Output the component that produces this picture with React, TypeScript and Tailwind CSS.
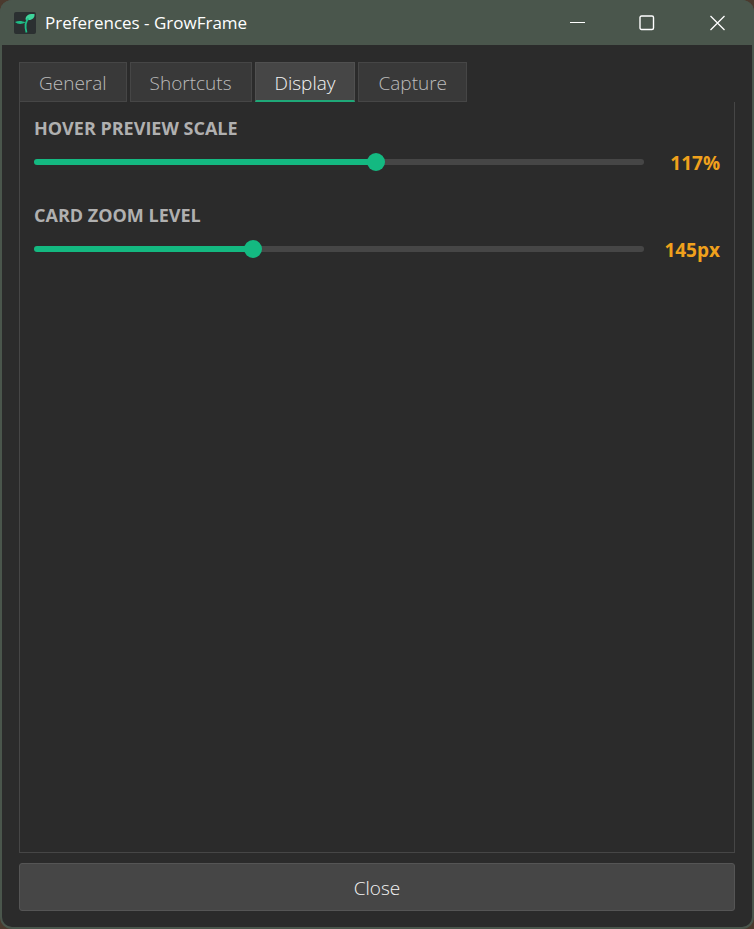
import React, { useState } from 'react';

const tabs = ['General', 'Shortcuts', 'Display', 'Capture'];

interface SliderRowProps {
  id: string;
  label: string;
  unit: string;
  min: number;
  max: number;
  value: number;
  onChange: (value: number) => void;
}

const SliderRow = ({ id, label, unit, min, max, value, onChange }: SliderRowProps) => {
  const ratio = (value - min) / (max - min);
  // The thumb is 18px wide, so its center travels the width minus 18px
  const stop = `calc(9px + (100% - 18px) * ${ratio})`;
  const fill = {
    '--track': `linear-gradient(to right, #14b981 ${stop}, #464646 ${stop})`,
  } as React.CSSProperties;

  return (
    <div>
      <label htmlFor={id} className="block text-lg leading-6 font-bold text-[#b0b0b0]">
        {label}
      </label>
      <div className="mt-[9px] flex h-[26px] items-center">
        <input
          id={id}
          type="range"
          min={min}
          max={max}
          value={value}
          onChange={(e) => onChange(Number(e.target.value))}
          style={fill}
          className="h-[18px] min-w-0 flex-1 cursor-pointer appearance-none bg-transparent [&::-webkit-slider-runnable-track]:h-[6px] [&::-webkit-slider-runnable-track]:rounded-[3px] [&::-webkit-slider-runnable-track]:[background:var(--track)] [&::-webkit-slider-thumb]:-mt-[6px] [&::-webkit-slider-thumb]:h-[18px] [&::-webkit-slider-thumb]:w-[18px] [&::-webkit-slider-thumb]:appearance-none [&::-webkit-slider-thumb]:rounded-full [&::-webkit-slider-thumb]:bg-[#14b981]"
        />
        <output htmlFor={id} className="w-[76px] pt-[2px] text-right text-[19px] leading-7 font-bold text-[#f0a11c]">
          {value}
          {unit}
        </output>
      </div>
    </div>
  );
};

const TitleBar = () => (
  <header className="flex h-[45px] shrink-0 items-center bg-[#4a564c] pr-[2px] pl-[14px] text-white">
    <svg className="h-[22px] w-[22px]" viewBox="0 0 22 22" aria-hidden="true">
      <rect width="22" height="22" rx="2" fill="#2b3031" />
      <path d="M11.500 7.500C11.500 3.500 14.500 1.500 20.500 2C21 6 18 8.500 12.500 8Z" fill="#3fd49b" />
      <path d="M1 10C4 8.500 8 8.500 11.500 10.500C8 12.500 3.500 12.500 1 10Z" fill="#1fbd86" />
      <path d="M14.500 6.500C11 9.500 11 15 12.500 20.500" fill="none" stroke="#1fbd86" strokeWidth="1.800" />
    </svg>
    <h1 className="ml-[9px] flex-1 text-[17px]">Preferences - GrowFrame</h1>
    <button aria-label="Minimize" className="flex h-full w-[70px] items-center justify-center">
      <svg className="h-4 w-4" viewBox="0 0 16 16" fill="none" stroke="currentColor">
        <path d="M1 7.500H16" />
      </svg>
    </button>
    <button aria-label="Maximize" className="flex h-full w-[70px] items-center justify-center">
      <svg className="h-4 w-4" viewBox="0 0 16 16" fill="none" stroke="currentColor" strokeWidth="1.400">
        <rect x="1" y="1" width="13.500" height="13.500" rx="1.500" />
      </svg>
    </button>
    <button aria-label="Close window" className="flex h-full w-[70px] items-center justify-center">
      <svg className="h-4 w-4" viewBox="0 0 16 16" fill="none" stroke="currentColor" strokeWidth="1.300">
        <path d="M1.500 1L15.500 15M15.500 1L1.500 15" />
      </svg>
    </button>
  </header>
);

const App = () => {
  const [activeTab, setActiveTab] = useState('Display');
  const [previewScale, setPreviewScale] = useState(117);
  const [cardZoom, setCardZoom] = useState(145);

  return (
    <div className="h-screen bg-[#4b3a2e] font-['Open_Sans','Noto_Sans',sans-serif]">
      <div className="flex h-full flex-col overflow-hidden rounded-xl bg-[#4a564c]">
        <TitleBar />
        <main className="mx-[2px] mb-[2px] flex min-h-0 flex-1 flex-col rounded-b-[10px] bg-[#2b2b2b] px-[17px] pt-[17px] pb-4">
          <div role="tablist" className="flex gap-[3px]">
            {tabs.map((tab) => (
              <button
                key={tab}
                role="tab"
                aria-selected={tab === activeTab}
                onClick={() => setActiveTab(tab)}
                className={`h-10 border px-[19px] pt-[2px] text-[19px] leading-7 font-light ${
                  tab === activeTab
                    ? 'border-[#505050] border-b-2 border-b-[#1fa878] bg-[#464646] text-[#f4f4f4]'
                    : 'border-[#464646] bg-[#393939] text-[#bcbcbc]'
                }`}
              >
                {tab}
              </button>
            ))}
          </div>

          <section
            role="tabpanel"
            aria-label={activeTab}
            className="flex-1 border-x border-b border-[#464646] px-[14px] pt-[14px]"
          >
            {activeTab === 'Display' && (
              <div className="flex flex-col gap-7">
                <SliderRow
                  id="preview-scale"
                  label="HOVER PREVIEW SCALE"
                  unit="%"
                  min={40}
                  max={177}
                  value={previewScale}
                  onChange={setPreviewScale}
                />
                <SliderRow
                  id="card-zoom"
                  label="CARD ZOOM LEVEL"
                  unit="px"
                  min={100}
                  max={227}
                  value={cardZoom}
                  onChange={setCardZoom}
                />
              </div>
            )}
          </section>

          <button className="mt-[10px] h-12 shrink-0 rounded-[3px] border border-[#555555] bg-[#464646] pt-[2px] text-[19px] leading-7 font-light text-[#f4f4f4]">
            Close
          </button>
        </main>
      </div>
    </div>
  );
};

export default App;
